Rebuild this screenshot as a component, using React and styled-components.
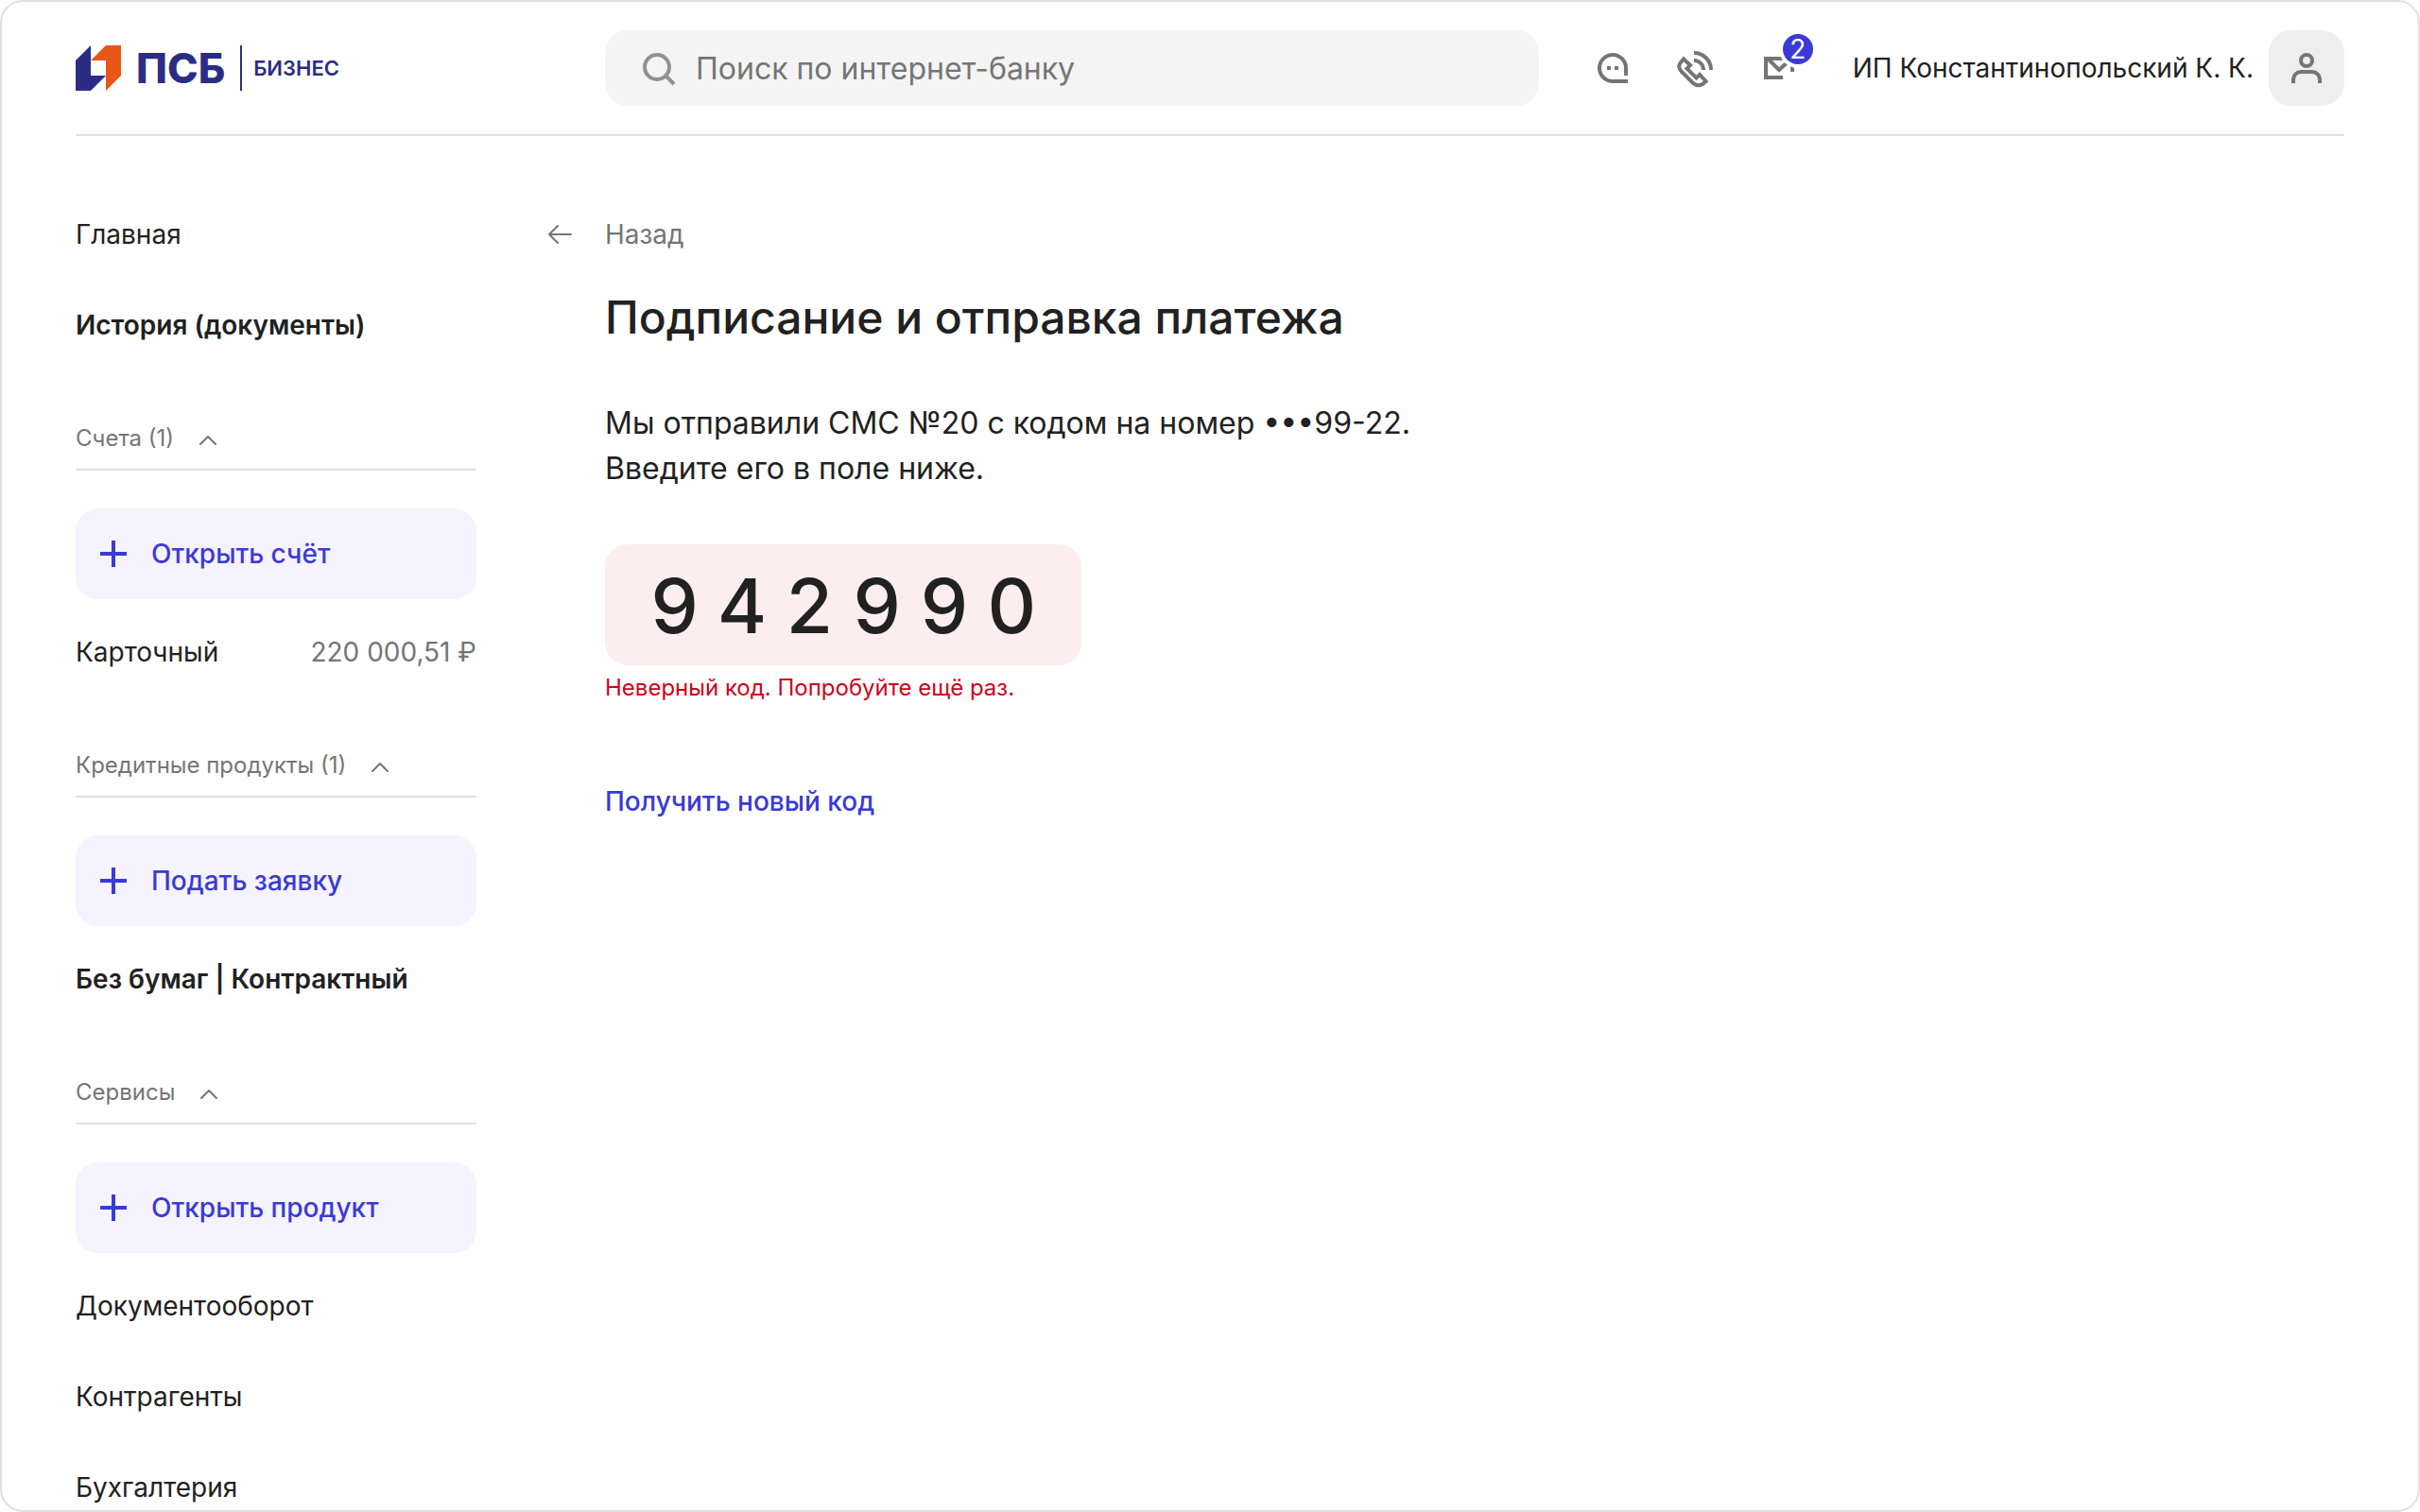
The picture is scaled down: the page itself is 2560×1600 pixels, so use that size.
import React, { useState } from "react";
import styled, { createGlobalStyle, ThemeProvider } from "styled-components";

const theme = {
  text: "#212121",
  muted: "#757575",
  line: "#e0e0e0",
  accent: "#3a3ad6",
  accentSoft: "#f5f3ff",
  danger: "#d0021b",
  dangerSoft: "#fceeee",
  brand: "#2b2d84",
  brandAlt: "#ea5616",
};

const GlobalStyle = createGlobalStyle`
  *, *::before, *::after { box-sizing: border-box; }
  body { margin: 0; background: #fff; }
  body, button, input { font-family: Inter, "Liberation Sans", sans-serif; }
  button { border: 0; padding: 0; background: none; cursor: pointer; text-align: left; }
  a { color: inherit; text-decoration: none; }
  h1, p, fieldset { margin: 0; padding: 0; border: 0; min-width: 0; }
  svg { display: block; flex: none; }
`;

const Frame = styled.div`
  height: 100vh;
  overflow: hidden;
  padding: 0 78px;
  border: 2px solid ${(p) => p.theme.line};
  border-radius: 24px;
  background: #fff;
  color: ${(p) => p.theme.text};
  font-size: 28px;
  line-height: 48px;
`;

const Header = styled.header`
  display: grid;
  grid-template-columns: 560px 1fr;
  align-items: center;
  padding: 30px 0;
  border-bottom: 2px solid ${(p) => p.theme.line};
`;

const Logo = styled.a`
  display: flex;
  align-items: center;
  gap: 16px;
  color: ${(p) => p.theme.brand};
  font-weight: 600;
  font-size: 22px;
`;

const Brand = styled.span`
  font-size: 44px;
  font-weight: 800;
`;

const Division = styled.span`
  padding-left: 12px;
  border-left: 2px solid ${(p) => p.theme.brand};
`;

const HeaderTools = styled.div`
  display: flex;
  align-items: center;
  gap: 54px;
`;

const Search = styled.label`
  display: flex;
  flex: 1;
  align-items: center;
  gap: 16px;
  height: 80px;
  padding: 0 32px;
  border-radius: 24px;
  background: #f4f4f4;
  color: #919191;
`;

const SearchInput = styled.input`
  flex: 1;
  min-width: 0;
  height: 48px;
  padding: 0;
  border: 0;
  outline: 0;
  background: none;
  color: ${(p) => p.theme.text};
  font-size: 32px;
  &::placeholder { color: ${(p) => p.theme.muted}; opacity: 1; }
`;

const IconBar = styled.div`
  display: flex;
  gap: 40px;
`;

const IconButton = styled.button`
  position: relative;
  width: 48px;
  height: 48px;
  color: ${(p) => p.theme.muted};
`;

const Badge = styled.span`
  position: absolute;
  top: -12px;
  left: 28px;
  width: 32px;
  height: 32px;
  border-radius: 50%;
  box-shadow: 0 0 0 4px #fff;
  background: ${(p) => p.theme.accent};
  color: #fff;
  font-size: 28px;
  line-height: 32px;
  text-align: center;
`;

const Profile = styled.div`
  display: flex;
  align-items: center;
  gap: 16px;
  white-space: nowrap;
`;

const Avatar = styled.button`
  display: grid;
  place-items: center;
  width: 80px;
  height: 80px;
  border-radius: 24px;
  background: #eeeeee;
  color: ${(p) => p.theme.muted};
`;

const Body = styled.div`
  display: grid;
  grid-template-columns: 424px 1fr;
  gap: 72px;
`;

const Sidebar = styled.nav`
  padding-top: 56px;
`;

const NavItem = styled.a`
  display: flex;
  justify-content: space-between;
  padding: 24px 0;
  font-weight: ${(p) => (p.$strong ? 600 : 400)};
`;

const Amount = styled.span`
  color: ${(p) => p.theme.muted};
`;

const SectionToggle = styled.button`
  display: flex;
  align-items: center;
  gap: 24px;
  width: 100%;
  padding: 48px 0 8px;
  border-bottom: 2px solid ${(p) => p.theme.line};
  color: ${(p) => p.theme.muted};
  font-size: 24px;
  line-height: 48px;
`;

const AddButton = styled.button`
  display: flex;
  align-items: center;
  gap: 16px;
  width: 100%;
  height: 96px;
  margin: 40px 0 8px;
  padding: 0 16px;
  border-radius: 24px;
  background: ${(p) => p.theme.accentSoft};
  color: ${(p) => p.theme.accent};
  font-size: 28px;
  font-weight: 500;
`;

const Content = styled.main`
  display: grid;
  grid-template-columns: 64px 1fr;
  align-content: start;
  padding-top: 80px;
`;

const BackLink = styled.a`
  display: grid;
  grid-column: 1 / -1;
  grid-template-columns: subgrid;
  align-items: center;
  justify-self: start;
  color: ${(p) => p.theme.muted};
`;

const Confirmation = styled.form`
  grid-column: 2;
  padding-top: 32px;
`;

const Title = styled.h1`
  font-size: 48px;
  font-weight: 500;
  line-height: 64px;
`;

const Hint = styled.p`
  margin: 56px 0;
  font-size: 32px;
`;

const CodeField = styled.fieldset`
  display: grid;
  grid-template-columns: repeat(6, 1fr);
  align-items: center;
  width: 504px;
  height: 128px;
  padding: 0 38px;
  border-radius: 24px;
  background: ${(p) => p.theme.dangerSoft};
`;

const Digit = styled.input`
  width: 100%;
  height: 96px;
  padding: 0;
  border: 0;
  outline: 0;
  background: none;
  color: ${(p) => p.theme.text};
  font-size: 80px;
  font-weight: 500;
  text-align: center;
`;

const ErrorText = styled.p`
  margin-bottom: 72px;
  color: ${(p) => p.theme.danger};
  font-size: 24px;
`;

const ResendButton = styled.button`
  color: ${(p) => p.theme.accent};
  font-size: 28px;
  font-weight: 500;
  line-height: 48px;
`;

function Icon({ size = 48, weight = 4, children }) {
  return (
    <svg width={size} height={size} viewBox={`0 0 ${size} ${size}`} fill="none"
      stroke="currentColor" strokeWidth={weight} aria-hidden="true">
      {children}
    </svg>
  );
}

const LogoMark = () => (
  <svg width="48" height="48" viewBox="0 0 48 48" aria-hidden="true">
    <path d="M0 16 16 0V32H32L16 48H0Z" fill={theme.brand} />
    <path d="M32 0H48V32L32 48V16H16Z" fill={theme.brandAlt} />
  </svg>
);
const SearchIcon = () => (
  <Icon><circle cx="23" cy="23" r="13" /><path d="M32 32 41 41" /></Icon>
);
const ChatIcon = () => (
  <Icon>
    <path d="M38 32V24A14 14 0 1 0 24 38H40" />
    <path d="M18 24H22M26 24H30" />
  </Icon>
);
const PhoneIcon = () => (
  <Icon>
    <path d="M22 8A18 18 0 0 1 40 26M22 16A10 10 0 0 1 32 26" />
    <path d="M11 14.5 18 21 14.5 24.5 24.5 34.5 28 31 34.5 38 31 41Q26 44 21 40L9 28Q4 22.5 8 18Z" />
  </Icon>
);
const MailIcon = () => (
  <Icon>
    <path d="M28 34H10V14H38V28" />
    <path d="M13 15 24 26 36 15" />
  </Icon>
);
const UserIcon = () => (
  <Icon>
    <circle cx="24" cy="16" r="6" />
    <path d="M10 40V36A8 8 0 0 1 18 28H30A8 8 0 0 1 38 36V40" />
  </Icon>
);
const PlusIcon = () => <Icon><path d="M24 10V38M10 24H38" /></Icon>;
const ChevronIcon = () => (
  <Icon size={24} weight={2}><path d="M4 18 12 10 20 18" strokeLinecap="round" strokeLinejoin="round" /></Icon>
);
const ArrowIcon = () => (
  <Icon size={32} weight={2}><path d="M28 16H5M14 7 5 16 14 25" strokeLinecap="round" strokeLinejoin="round" /></Icon>
);

const sections = [
  { title: "Счета (1)", action: "Открыть счёт", items: [{ label: "Карточный", amount: "220 000,51 ₽" }] },
  { title: "Кредитные продукты (1)", action: "Подать заявку", items: [{ label: "Без бумаг | Контрактный", strong: true }] },
  { title: "Сервисы", action: "Открыть продукт", items: [{ label: "Документооборот" }, { label: "Контрагенты" }, { label: "Бухгалтерия" }] },
];

function Section({ title, action, items }) {
  const [open, setOpen] = useState(true);
  return (
    <section>
      <SectionToggle type="button" aria-expanded={open} onClick={() => setOpen(!open)}>
        {title}
        <ChevronIcon />
      </SectionToggle>
      {open && (
        <>
          <AddButton type="button"><PlusIcon />{action}</AddButton>
          {items.map((item) => (
            <NavItem key={item.label} href="#" $strong={item.strong}>
              {item.label}
              {item.amount && <Amount>{item.amount}</Amount>}
            </NavItem>
          ))}
        </>
      )}
    </section>
  );
}

function CodeInput() {
  const [code, setCode] = useState([..."942990"]);
  return (
    <CodeField aria-label="Код из СМС">
      {code.map((digit, i) => (
        <Digit key={i} inputMode="numeric" maxLength={1} aria-label={`Цифра ${i + 1}`} aria-invalid="true"
          value={digit} onChange={(e) => setCode(code.map((d, k) => (k === i ? e.target.value : d)))} />
      ))}
    </CodeField>
  );
}

export default function App() {
  return (
    <ThemeProvider theme={theme}>
      <GlobalStyle />
      <Frame>
        <Header>
          <Logo href="#">
            <LogoMark />
            <Brand>ПСБ</Brand>
            <Division>БИЗНЕС</Division>
          </Logo>
          <HeaderTools>
            <Search>
              <SearchIcon />
              <SearchInput type="search" placeholder="Поиск по интернет-банку" aria-label="Поиск по интернет-банку" />
            </Search>
            <IconBar>
              <IconButton type="button" aria-label="Чат"><ChatIcon /></IconButton>
              <IconButton type="button" aria-label="Звонок"><PhoneIcon /></IconButton>
              <IconButton type="button" aria-label="Письма"><MailIcon /><Badge>2</Badge></IconButton>
            </IconBar>
            <Profile>
              <span>ИП Константинопольский К. К.</span>
              <Avatar type="button" aria-label="Профиль"><UserIcon /></Avatar>
            </Profile>
          </HeaderTools>
        </Header>
        <Body>
          <Sidebar>
            <NavItem href="#">Главная</NavItem>
            <NavItem href="#" $strong>История (документы)</NavItem>
            {sections.map((s) => <Section key={s.title} {...s} />)}
          </Sidebar>
          <Content>
            <BackLink href="#"><ArrowIcon />Назад</BackLink>
            <Confirmation>
              <Title>Подписание и отправка платежа</Title>
              <Hint>
                Мы отправили СМС №20 с кодом на номер •••99-22.
                <br />
                Введите его в поле ниже.
              </Hint>
              <CodeInput />
              <ErrorText role="alert">Неверный код. Попробуйте ещё раз.</ErrorText>
              <ResendButton type="button">Получить новый код</ResendButton>
            </Confirmation>
          </Content>
        </Body>
      </Frame>
    </ThemeProvider>
  );
}
